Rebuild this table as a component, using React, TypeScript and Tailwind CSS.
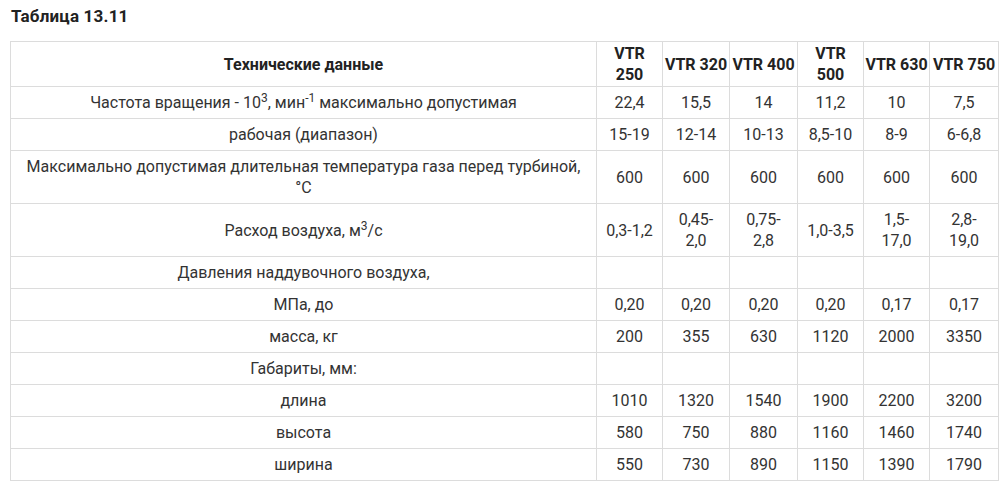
const cols: React.ReactNode[] = [
  <>VTR<br />250</>,
  'VTR 320',
  'VTR 400',
  <>VTR<br />500</>,
  'VTR 630',
  'VTR 750',
];

interface Row {
  label: React.ReactNode;
  values: React.ReactNode[];
}

const rows: Row[] = [
  {
    label: (
      <>
        Частота вращения - 10<sup>3</sup>, мин<sup>-1</sup> максимально допустимая
      </>
    ),
    values: ['22,4', '15,5', '14', '11,2', '10', '7,5'],
  },
  { label: 'рабочая (диапазон)', values: ['15-19', '12-14', '10-13', '8,5-10', '8-9', '6-6,8'] },
  {
    label: (
      <>
        Максимально допустимая длительная температура газа перед турбиной,
        <br />
        °C
      </>
    ),
    values: ['600', '600', '600', '600', '600', '600'],
  },
  {
    label: (
      <>
        Расход воздуха, м<sup>3</sup>/с
      </>
    ),
    values: [
      '0,3-1,2',
      <>0,45-<br />2,0</>,
      <>0,75-<br />2,8</>,
      '1,0-3,5',
      <>1,5-<br />17,0</>,
      <>2,8-<br />19,0</>,
    ],
  },
  { label: 'Давления наддувочного воздуха,', values: ['', '', '', '', '', ''] },
  { label: 'МПа, до', values: ['0,20', '0,20', '0,20', '0,20', '0,17', '0,17'] },
  { label: 'масса, кг', values: ['200', '355', '630', '1120', '2000', '3350'] },
  { label: 'Габариты, мм:', values: ['', '', '', '', '', ''] },
  { label: 'длина', values: ['1010', '1320', '1540', '1900', '2200', '3200'] },
  { label: 'высота', values: ['580', '750', '880', '1160', '1460', '1740'] },
  { label: 'ширина', values: ['550', '730', '890', '1150', '1390', '1790'] },
];

const App = () => {
  return (
    <div className="min-h-screen bg-white px-[10px] pt-[5px] text-[#333] font-['Roboto',sans-serif]">
      {/* Caption */}
      <div className="text-[17px] font-bold leading-[22px] text-[#222] pl-px tracking-[0.2px]">Таблица 13.11</div>

      <table className="mt-[14px] w-[988px] table-fixed border-collapse text-[16px] leading-[21px]">
        <colgroup>
          <col className="w-[586px]" />
          <col className="w-[66px]" />
          <col className="w-[67px]" />
          <col className="w-[68px]" />
          <col className="w-[66px]" />
          <col className="w-[66px]" />
          <col className="w-[69px]" />
        </colgroup>
        <thead>
          <tr>
            <th className="border border-[#dcdcdc] py-px px-0 text-center font-bold text-[#222]">
              Технические данные
            </th>
            {cols.map((c, i) => (
              <th
                key={i}
                className="border border-[#dcdcdc] py-px px-0 text-center font-bold text-[#222] whitespace-nowrap"
              >
                {c}
              </th>
            ))}
          </tr>
        </thead>
        <tbody>
          {rows.map((row, i) => (
            <tr key={i}>
              <td className="border border-[#dcdcdc] px-1 py-[5px] text-center">{row.label}</td>
              {row.values.map((v, j) => (
                <td key={j} className="border border-[#dcdcdc] px-0 py-[5px] text-center">
                  {v}
                </td>
              ))}
            </tr>
          ))}
        </tbody>
      </table>
    </div>
  );
};

export default App;
